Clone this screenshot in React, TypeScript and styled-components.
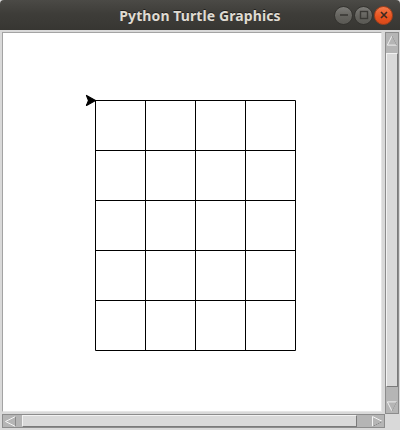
import styled, { createGlobalStyle } from 'styled-components'

const GlobalStyle = createGlobalStyle`
  html, body {
    margin: 0;
    padding: 0;
    background: #ffffff;
  }
  * {
    box-sizing: border-box;
  }
`

const Window = styled.div`
  display: flex;
  flex-direction: column;
  width: 400px;
  height: 430px;
  overflow: hidden;
  background: #d9d9d9;
`

const TitleBar = styled.div`
  display: grid;
  grid-template-columns: 1fr auto 1fr;
  align-items: center;
  height: 30px;
  flex-shrink: 0;
  background: linear-gradient(#4b4a46 0%, #3e3d39 45%, #373632 100%);
  border-radius: 4px 4px 0 0;
`

const Title = styled.div`
  grid-column: 2;
  color: #dfdbd2;
  font-family: 'Noto Sans', 'DejaVu Sans', sans-serif;
  font-size: 14px;
  font-weight: 700;
  letter-spacing: 0.1px;
  text-shadow: 0 -1px 0 rgba(0, 0, 0, 0.5);
`

const Controls = styled.div`
  grid-column: 3;
  justify-self: end;
  display: flex;
  align-items: center;
  gap: 1px;
  padding-right: 7px;
`

const ControlButton = styled.div<{ $close?: boolean }>`
  display: flex;
  align-items: center;
  justify-content: center;
  width: 19px;
  height: 19px;
  border-radius: 50%;
  border: 1px solid ${({ $close }) => ($close ? '#a8401a' : '#34332f')};
  background: ${({ $close }) =>
    $close
      ? 'linear-gradient(#f27a4b, #e95420 55%, #d9491a)'
      : 'linear-gradient(#7d7c78, #64635e 55%, #5a5954)'};
  color: #3c3b37;
`

const Body = styled.div`
  display: grid;
  grid-template-columns: 385px 15px;
  grid-template-rows: 384px 16px;
  flex: 1;
`

const CanvasCell = styled.div`
  display: flex;
  padding: 2px;
`

const CanvasFrame = styled.div`
  flex: 1;
  display: flex;
  background: #ffffff;
  border-top: 1px solid #a3a3a3;
  border-left: 1px solid #a3a3a3;
  border-right: 1px solid #e6e6e6;
  border-bottom: 1px solid #e6e6e6;
  margin-right: 1px;
`

const Drawing = styled.svg`
  display: block;
  width: 100%;
  height: 100%;
`

const Trough = styled.div<{ $vertical?: boolean }>`
  display: flex;
  flex-direction: ${({ $vertical }) => ($vertical ? 'column' : 'row')};
  background: #b5b5b5;
  border: 1px solid #8c8c8c;
  margin: ${({ $vertical }) => ($vertical ? '2px 1px 0 0' : '0 0 2px 2px')};
`

const ArrowButton = styled.div<{ $vertical?: boolean }>`
  display: flex;
  align-items: center;
  justify-content: center;
  flex-shrink: 0;
  width: ${({ $vertical }) => ($vertical ? '100%' : '14px')};
  height: ${({ $vertical }) => ($vertical ? '14px' : '100%')};
`

const Slider = styled.div<{ $vertical?: boolean }>`
  flex: 1;
  background: #d9d9d9;
  border-top: 1px solid #f2f2f2;
  border-left: 1px solid #f2f2f2;
  border-right: 1px solid #7a7a7a;
  border-bottom: 1px solid #7a7a7a;
  margin: ${({ $vertical }) => ($vertical ? '6px 0 12px 0' : '0 13px 0 5px')};
`

const Corner = styled.div`
  background: #d9d9d9;
`

type Dir = 'up' | 'down' | 'left' | 'right'

const arrowPoints: Record<Dir, string> = {
  up: '6.5,1.5 11.5,11.5 1.5,11.5',
  down: '1.5,1.5 11.5,1.5 6.5,11.5',
  left: '1.5,6.5 11.5,1.5 11.5,11.5',
  right: '1.5,1.5 11.5,6.5 1.5,11.5'
}

const Arrow = ({ dir }: { dir: Dir }) => (
  <svg width="13" height="13" viewBox="0 0 13 13">
    <polygon points={arrowPoints[dir]} fill="#b5b5b5" stroke="#f4f4f4" strokeWidth="1" />
    {dir === 'up' && <line x1="6.5" y1="1.5" x2="11.5" y2="11.5" stroke="#8a8a8a" />}
    {dir === 'down' && <line x1="11.5" y1="1.5" x2="6.5" y2="11.5" stroke="#8a8a8a" />}
    {dir === 'left' && <line x1="11.5" y1="1.5" x2="11.5" y2="11.5" stroke="#8a8a8a" />}
    {dir === 'right' && <line x1="1.5" y1="11.5" x2="11.5" y2="6.5" stroke="#8a8a8a" />}
  </svg>
)

// grid origin inside the canvas (canvas content starts at page 3,33)
const GRID_X = 92.5
const GRID_Y = 67.5
const CELL = 50
const COLS = 4
const ROWS = 5

const TurtleGrid = () => {
  const verticals = Array.from({ length: COLS + 1 }, (_, i) => GRID_X + i * CELL)
  const horizontals = Array.from({ length: ROWS + 1 }, (_, i) => GRID_Y + i * CELL)

  return (
    <Drawing>
      {verticals.map((x) => (
        <line key={`v${x}`} x1={x} y1={GRID_Y} x2={x} y2={GRID_Y + ROWS * CELL} stroke="#000" strokeWidth="1" />
      ))}
      {horizontals.map((y) => (
        <line key={`h${y}`} x1={GRID_X} y1={y} x2={GRID_X + COLS * CELL} y2={y} stroke="#000" strokeWidth="1" />
      ))}
      <polygon points="92.5,67.5 83.5,62.5 85.5,67.5 83.5,72.5" fill="#000" stroke="#000" strokeWidth="1.2" strokeLinejoin="round" />
    </Drawing>
  )
}

const App = () => {
  return (
    <>
      <GlobalStyle />
      <Window>
        <TitleBar>
          <Title>Python Turtle Graphics</Title>
          <Controls>
            <ControlButton>
              <svg width="10" height="10" viewBox="0 0 10 10">
                <line x1="1" y1="5" x2="9" y2="5" stroke="#3a3935" strokeWidth="1.6" />
              </svg>
            </ControlButton>
            <ControlButton>
              <svg width="10" height="10" viewBox="0 0 10 10">
                <rect x="1.5" y="1.5" width="7" height="7" fill="none" stroke="#3a3935" strokeWidth="1.4" />
              </svg>
            </ControlButton>
            <ControlButton $close>
              <svg width="10" height="10" viewBox="0 0 10 10">
                <path d="M2 2 L8 8 M8 2 L2 8" stroke="#3a2a22" strokeWidth="1.6" />
              </svg>
            </ControlButton>
          </Controls>
        </TitleBar>
        <Body>
          <CanvasCell>
            <CanvasFrame>
              <TurtleGrid />
            </CanvasFrame>
          </CanvasCell>
          <Trough $vertical>
            <ArrowButton $vertical>
              <Arrow dir="up" />
            </ArrowButton>
            <Slider $vertical />
            <ArrowButton $vertical>
              <Arrow dir="down" />
            </ArrowButton>
          </Trough>
          <Trough>
            <ArrowButton>
              <Arrow dir="left" />
            </ArrowButton>
            <Slider />
            <ArrowButton>
              <Arrow dir="right" />
            </ArrowButton>
          </Trough>
          <Corner />
        </Body>
      </Window>
    </>
  )
}

export default App
